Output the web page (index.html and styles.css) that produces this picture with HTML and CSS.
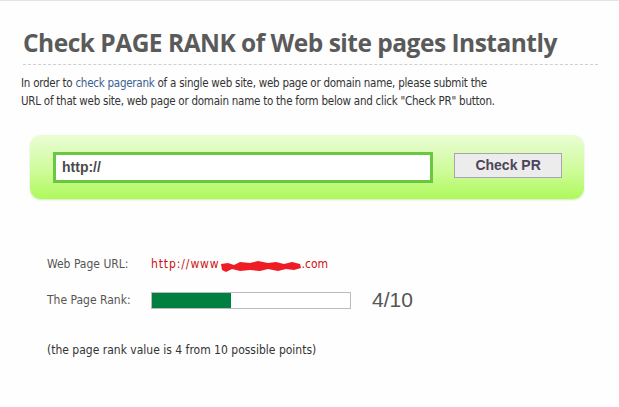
FILE: index.html
```html
<!DOCTYPE html>
<html>
<head>
<meta charset="utf-8">
<link rel="stylesheet" href="styles.css">
</head>
<body>
<div class="page">
  <h1 class="title">Check PAGE RANK of Web site pages Instantly</h1>
  <p class="intro">In order to <a class="link" href="#">check pagerank</a> of a single web site, web page or domain name, please submit the URL of that web site, web page or domain name to the form below and click "Check PR" button.</p>
  <form class="checkbox">
    <input class="url" type="text" value="http://">
    <button class="btn" type="button">Check PR</button>
  </form>
  <div class="results">
    <div class="row">
      <span class="label">Web Page URL:</span>
      <span class="url-val"><span class="proto">http://www</span><svg class="redact" width="82" height="12" viewBox="0 0 82 12"><path d="M1 4 L8 3 L14 5 L20 2 L30 3 L38 1 L48 3 L56 2 L64 4 L72 2 L80 4 L81 8 L74 10 L66 9 L58 11 L48 9 L40 11 L30 10 L20 11 L12 9 L6 12 L2 10 Z" fill="#ee1c25"/></svg>.com</span>
    </div>
    <div class="row">
      <span class="label">The Page Rank:</span>
      <span class="bar"><span class="fill" style="width:40%"></span></span>
      <span class="score">4/10</span>
    </div>
    <p class="note">(the page rank value is 4 from 10 possible points)</p>
  </div>
</div>
</body>
</html>
```
FILE: styles.css
```css
html, body {
  margin: 0;
  padding: 0;
  background: #fefefe;
}
body {
  border-top: 1px solid #e3e3e3;
  font-family: "DejaVu Sans Condensed", "DejaVu Sans", sans-serif;
}
.page {
  padding: 0 21px 0 20px;
}
.title {
  margin: 27px 0 0 3px;
  padding-bottom: 6px;
  font-family: "Open Sans", sans-serif;
  font-weight: 700;
  font-size: 24.5px;
  line-height: 30px;
  color: #5a5a5a;
  letter-spacing: -0.5px;
  border-bottom: 1px dashed #cfcfcf;
}
.intro {
  margin: 9px 0 0 1px;
  max-width: 480px;
  font-size: 11.5px;
  letter-spacing: -0.25px;
  line-height: 18px;
  color: #333;
}
.link {
  color: #3b5f8f;
  text-decoration: none;
}
.checkbox {
  margin: 25px 14px 0 10px;
  height: 64px;
  box-sizing: border-box;
  border-radius: 11px;
  background: linear-gradient(#eafdd6, #cffb9a 55%, #aef95c);
  box-shadow: 0 1px 2px rgba(120, 200, 60, 0.35);
  display: flex;
  align-items: center;
  padding: 0 22px 0 23px;
  gap: 21px;
}
.url {
  width: 381px;
  height: 31px;
  box-sizing: border-box;
  border: 3px solid #6ac840;
  background: #fff;
  padding: 0 6px;
  font-family: "Liberation Sans", Arial, sans-serif;
  font-weight: 700;
  font-size: 14px;
  color: #4a4a4a;
  outline: none;
}
.btn {
  width: 108px;
  height: 25px;
  box-sizing: border-box;
  border: 1px solid #a9a3b5;
  background: #ececec;
  font-family: "Liberation Sans", Arial, sans-serif;
  font-weight: 700;
  font-size: 14px;
  color: #4b4559;
  padding: 0;
  margin-top: -4px;
}
.results {
  margin: 56px 0 0 27px;
  font-size: 12px;
  color: #555;
}
.row {
  display: flex;
  align-items: center;
  height: 18px;
  margin-bottom: 18px;
}
.label {
  width: 104px;
  flex: none;
}
.url-val {
  color: #cc1111;
  display: inline-flex;
  align-items: center;
}
.proto {
  letter-spacing: 0.9px;
}
.redact {
  display: block;
  margin-top: 3px;
}
.bar {
  width: 200px;
  height: 17px;
  box-sizing: border-box;
  border: 1px solid #bbb;
  background: #fff;
  display: flex;
}
.fill {
  display: block;
  height: 100%;
  background: #008040;
}
.score {
  margin-left: 21px;
  font-family: "Liberation Sans", Arial, sans-serif;
  font-size: 21px;
  color: #555;
}
.note {
  margin: 34px 0 0 0;
  color: #333;
}
```
